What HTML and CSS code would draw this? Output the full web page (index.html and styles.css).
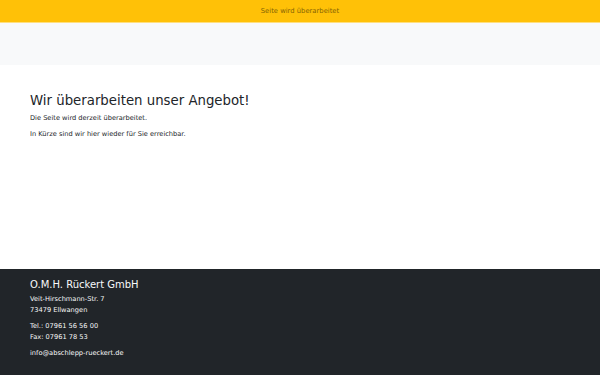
FILE: index.html
```html
<!DOCTYPE html>
<html lang="de">
<head>
    <meta charset="UTF-8">
    <meta name="viewport" content="width=device-width, initial-scale=1.0">
    <title>O.M.H. Rückert GmbH</title>
    <link rel="stylesheet" href="styles.css">
</head>
<body>
    <!-- HINWEIS -->
    <div class="notice">Seite wird überarbeitet</div>

    <!-- HEADER -->
    <header class="top-band"></header>

    <!-- INHALT -->
    <main class="content">
        <h1>Wir überarbeiten unser Angebot!</h1>
        <p>Die Seite wird derzeit überarbeitet.</p>
        <p>In Kürze sind wir hier wieder für Sie erreichbar.</p>
    </main>

    <!-- FOOTER -->
    <footer class="footer">
        <h2>O.M.H. Rückert GmbH</h2>
        <p>Veit-Hirschmann-Str. 7<br>73479 Ellwangen</p>
        <p>Tel.: 07961 56 56 00<br>Fax: 07961 78 53</p>
        <p>info@abschlepp-rueckert.de</p>
    </footer>
</body>
</html>
```

FILE: styles.css
```css
/* === ALLGEMEIN === */
html, body {
    height: 100%;
}

body {
    font-family: 'DejaVu Sans', sans-serif;
    color: #212529;
    background-color: #fff;
    margin: 0;
    display: flex;
    flex-direction: column;
}

/* === HINWEIS === */
.notice {
    background-color: #ffc107;
    color: #856404;
    font-size: 6.8px;
    text-align: center;
    height: 22px;
    line-height: 22px;
    border-bottom: 1px solid #ffdf7e;
}

/* === HEADER === */
.top-band {
    height: 42px;
    background-color: #f8f9fa;
}

/* === INHALT === */
.content {
    flex: 1;
    padding: 28px 30px 0;
}

.content h1 {
    font-size: 13.3px;
    line-height: 16px;
    font-weight: 400;
    margin: 0 0 4px;
}

.content p {
    font-size: 6.65px;
    line-height: 10px;
    margin: 0 0 6px;
}

/* === FOOTER === */
.footer {
    background-color: #212529;
    color: #f8f9fa;
    height: 106px;
    padding: 10px 30px 0;
    box-sizing: border-box;
}

.footer h2 {
    font-size: 10px;
    line-height: 12px;
    font-weight: 400;
    margin: 0 0 2.5px;
}

.footer p {
    font-size: 6.65px;
    line-height: 11px;
    margin: 0 0 5px;
}
```
